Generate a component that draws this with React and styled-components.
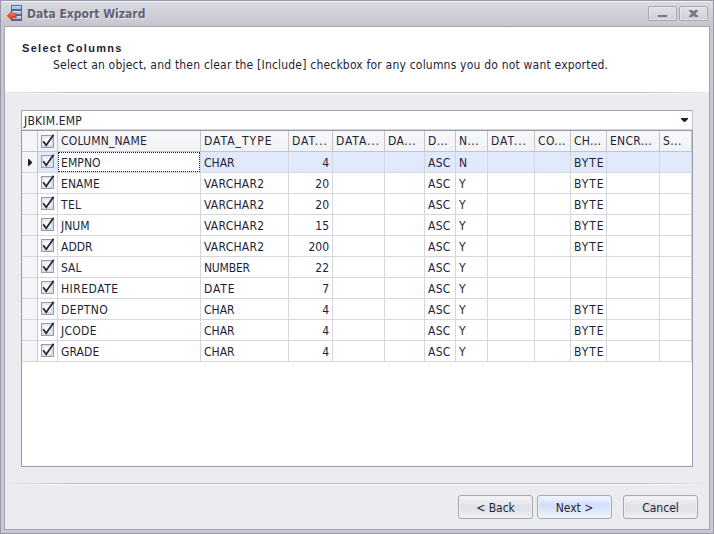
import React from "react";
import styled, { createGlobalStyle, css } from "styled-components";

const Global = createGlobalStyle`
  * { box-sizing: border-box; }
  body { margin: 0; background: #c8c8d0; }
`;

const Window = styled.div`
  width: 714px;
  height: 534px;
  display: flex;
  flex-direction: column;
  padding: 0 3px 3px;
  border: 1px solid #9b99a9;
  background: #c8c8d1;
  overflow: hidden;
  color: #1e1e37;
  font: 12px/16px "DejaVu Sans Condensed", "DejaVu Sans", sans-serif;
  font-stretch: condensed;
`;

const TitleBar = styled.header`
  flex: 0 0 25px;
  display: flex;
  align-items: flex-start;
  margin: 0 -3px;
  padding: 0 5px 0 6px;
  border-top: 1px solid #efeff3;
  background: linear-gradient(#d9d9e0, #c6c6cf);
`;

const AppIcon = styled.svg`
  width: 16px;
  height: 16px;
  margin-top: 3px;
`;

const Title = styled.h1`
  flex: 1;
  margin: 4px 0 0 4px;
  font: bold 12px/16px "DejaVu Sans Condensed", "DejaVu Sans", sans-serif;
  font-stretch: condensed;
  color: #626273;
  text-shadow: 1px 1px 0 #e6e6ec;
`;

const CaptionButton = styled.button`
  width: 29px;
  height: 15px;
  margin: 4px 0 0 2px;
  padding: 0;
  display: flex;
  border: 1px solid #a6a6b2;
  border-radius: 2px;
  background: linear-gradient(#e2e2e8, #cdcdd5);
  box-shadow: inset 0 0 0 1px #e4e4e9;
`;

const Body = styled.main`
  flex: 1;
  display: flex;
  flex-direction: column;
  border: 1px solid #a3a2b0;
  background: #ebecef;
`;

const Intro = styled.section`
  height: 65px;
  padding: 13px 0 0 17px;
  background: #fff;
`;

const Heading = styled.h2`
  margin: 0;
  font: bold 11px/16px "Liberation Sans", Arial, sans-serif;
  letter-spacing: 1.3px;
`;

const Hint = styled.p`
  margin: 1px 0 0 31px;
  letter-spacing: 0.2px;
  white-space: nowrap;
`;

const Rule = styled.div`
  height: 2px;
  background:
    linear-gradient(90deg, transparent, #b8bac2 10%, #b8bac2 90%, transparent) 0 0 / 100% 1px no-repeat,
    linear-gradient(90deg, transparent, #fff 10%, #fff 90%, transparent) 0 1px / 100% 1px no-repeat;
`;

const Combo = styled.div`
  height: 20px;
  margin: 16px 16px 0;
  padding: 2px 4px 0 2px;
  display: flex;
  justify-content: space-between;
  border: 1px solid #a0a1ae;
  border-bottom-color: #d5d6dc;
  border-right-color: #c0c1ca;
  background: #fff;
  letter-spacing: 0.2px;
`;

const Arrow = styled.svg`
  width: 7px;
  height: 4px;
  margin-top: 5px;
`;

const Grid = styled.div`
  height: 337px;
  margin: 0 16px 16px;
  border: 1px solid #9a9baa;
  background: #fff;
`;

const Row = styled.div`
  display: grid;
  grid-template-columns: 16px 20px 143px 88px 44px 52px 40px 31px 32px 47px 36px 36px 53px 32px;
  height: 21px;
  ${(p) => p.$selected && css`background: #e1e9fd;`}
  ${(p) => p.$header && css`background: linear-gradient(#f8f8fa, #f1f2f4);`}
`;

const Cell = styled.div`
  min-width: 0;
  padding: ${(p) => (p.$header ? 2 : 3)}px 2px 0 3px;
  border: solid ${(p) => (p.$header ? "#c3c4cd" : "#d6d7dd")};
  border-width: 0 1px 1px 0;
  white-space: nowrap;
  overflow: hidden;
  letter-spacing: ${(p) => p.$track || 0}px;
  text-align: ${(p) => (p.$right ? "right" : "left")};
  ${(p) => p.$right && css`padding-right: 3px;`}
  ${(p) => p.$focused && css`padding: 0;`}
`;

const FocusFrame = styled.div`
  height: 20px;
  padding: 2px 2px 0;
  border: 1px dotted #1e1e37;
  background: #fff;
`;

const Indicator = styled(Cell)`
  display: flex;
  align-items: center;
  padding: 0 0 0 6px;
  background: #f4f5f7;
  border-right-color: #c3c4cd;
`;

const CheckCell = styled(Cell)`
  padding: ${(p) => (p.$header ? 3 : 2)}px 0 0 3px;
  line-height: 0;
`;

const Footer = styled.footer`
  display: flex;
  gap: 4px;
  justify-content: flex-end;
  padding: 10px 11px 0 0;
`;

const PushButton = styled.button`
  width: 75px;
  height: 24px;
  padding: 2px 0 0;
  border: 1px solid #a6a7b3;
  border-radius: 3px;
  background: ${(p) =>
    p.$primary
      ? "linear-gradient(#f4f7ff, #d3defb 40%, #dde6fc 65%, #f2f5ff)"
      : "linear-gradient(#f7f7f9, #e0e1e6 45%, #e3e4e8 65%, #f0f0f3)"};
  box-shadow: inset 0 0 0 1px ${(p) => (p.$primary ? "#eef2ff" : "#efeff2")};
  color: inherit;
  font: inherit;
  &:last-child { margin-left: 7px; }
`;

function Check() {
  return (
    <svg width="15" height="15" viewBox="0 0 15 15">
      <rect x=".5" y="1.5" width="12" height="12" fill="#dcdde4" stroke="#9a9baa" />
      <path d="M2 12V3H11" fill="none" stroke="#f3f3f6" strokeWidth="1" />
      <rect x="3" y="4" width="7" height="7" fill="#fbfbfd" />
      <path d="M2.2 7.2L5.2 11.2L12.6 .8" fill="none" stroke="#25253d" strokeWidth="1.8" />
    </svg>
  );
}

const headers = [
  ["COLUMN_NAME", 0.2], ["DATA_TYPE", 1], ["DAT...", 1], ["DATA...", 0.9],
  ["DA...", 0.5], ["D...", 0.4], ["N...", 0.4], ["DAT...", 1],
  ["CO...", 0.4], ["CH...", 0.3], ["ENCR...", 0.3], ["S...", 0.4],
];

const tracking = {
  VARCHAR2: 0.25, TEL: 0.3, EMPNO: 0.1, HIREDATE: 0.5, DEPTNO: 0.4,
  JCODE: 0.3, GRADE: 0.1, DATE: 0.9, BYTE: 0.9, NUMBER: -0.2, ASC: 0.3, ENAME: 0.1,
};

const rows = [
  ["EMPNO", "CHAR", 4, "N", "BYTE"],
  ["ENAME", "VARCHAR2", 20, "Y", "BYTE"],
  ["TEL", "VARCHAR2", 20, "Y", "BYTE"],
  ["JNUM", "VARCHAR2", 15, "Y", "BYTE"],
  ["ADDR", "VARCHAR2", 200, "Y", "BYTE"],
  ["SAL", "NUMBER", 22, "Y", ""],
  ["HIREDATE", "DATE", 7, "Y", ""],
  ["DEPTNO", "CHAR", 4, "Y", "BYTE"],
  ["JCODE", "CHAR", 4, "Y", "BYTE"],
  ["GRADE", "CHAR", 4, "Y", "BYTE"],
];

export default function App() {
  return (
    <Window>
      <Global />
      <TitleBar>
        <AppIcon viewBox="0 0 16 16">
          <rect x="4" y="0" width="11" height="16" fill="#4a6a9f" />
          <path d="M5 1h9v3H5zM5 6h9v3H5zM5 11h9v3H5z" fill="#a9c1e2" />
          <path d="M5 1h9v1H5zM5 6h9v1H5zM5 11h9v1H5z" fill="#cfdff3" />
          <path d="M.3 10.8L5 6V8.8H9.2V12.6H5V15.5Z" fill="#f4482d" stroke="#c62a18" strokeWidth=".7" />
          <path d="M2.2 10.2L4.4 8V9.8H8.3" fill="none" stroke="#ff8f76" strokeWidth=".8" />
        </AppIcon>
        <Title>Data Export Wizard</Title>
        <CaptionButton aria-label="Minimize">
          <svg width="27" height="13"><path d="M9 8h9v2H9z" fill="#777887" /></svg>
        </CaptionButton>
        <CaptionButton aria-label="Close">
          <svg width="27" height="13">
            <path d="M9 3h3l1.5 1.6L15 3h3v1l-2.6 2.5L18 9v1h-3l-1.5-1.6L12 10H9V9l2.6-2.5L9 4z" fill="#777887" />
          </svg>
        </CaptionButton>
      </TitleBar>
      <Body>
        <Intro>
          <Heading>Select Columns</Heading>
          <Hint>
            Select an object, and then clear the [Include] checkbox for any columns you do not want exported.
          </Hint>
        </Intro>
        <Rule />
        <Combo>
          <span>JBKIM.EMP</span>
          <Arrow viewBox="0 0 7 4"><path d="M0 0h7v1L4 4H3L0 1z" fill="#1e1e37" /></Arrow>
        </Combo>
        <Grid>
          <Row $header>
            <Indicator $header />
            <CheckCell $header><Check /></CheckCell>
            {headers.map(([label, track], i) => (
              <Cell key={i} $header $track={track}>{label}</Cell>
            ))}
          </Row>
          {rows.map(([name, type, length, nullable, unit], i) => (
            <Row key={name} $selected={i === 0}>
              <Indicator>
                {i === 0 && <svg width="4" height="7"><path d="M0 0h1l3 3v1L1 7H0z" fill="#1e1e37" /></svg>}
              </Indicator>
              <CheckCell><Check /></CheckCell>
              <Cell $focused={i === 0} $track={tracking[name]}>
                {i === 0 ? <FocusFrame>{name}</FocusFrame> : name}
              </Cell>
              <Cell $track={tracking[type]}>{type}</Cell>
              <Cell $right>{length}</Cell>
              <Cell />
              <Cell />
              <Cell $track={tracking.ASC}>ASC</Cell>
              <Cell>{nullable}</Cell>
              <Cell />
              <Cell />
              <Cell $track={tracking.BYTE}>{unit}</Cell>
              <Cell />
              <Cell />
            </Row>
          ))}
        </Grid>
        <Rule />
        <Footer>
          <PushButton>&lt; Back</PushButton>
          <PushButton $primary>Next &gt;</PushButton>
          <PushButton>Cancel</PushButton>
        </Footer>
      </Body>
    </Window>
  );
}
